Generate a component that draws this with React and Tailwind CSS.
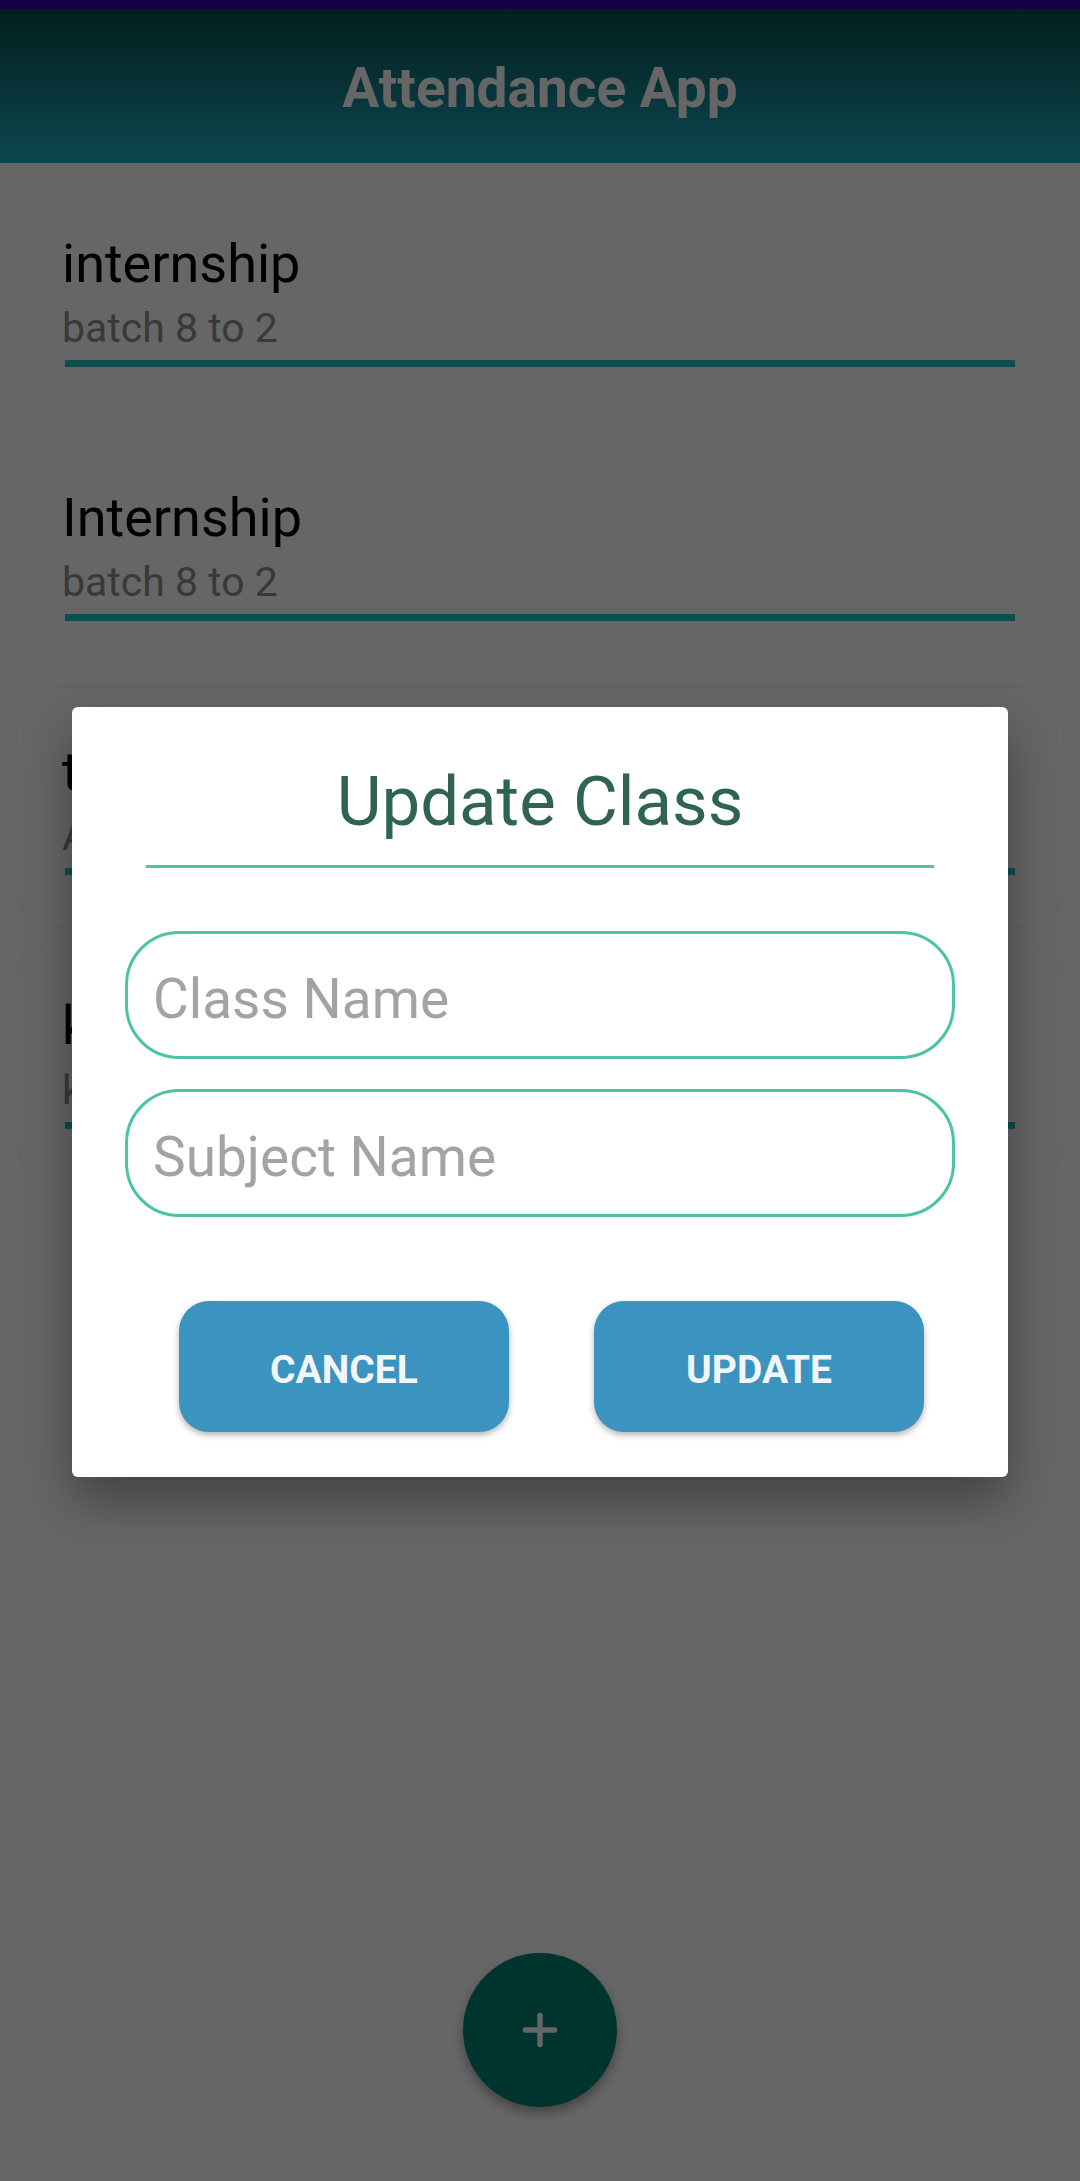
import React from "react";
import { Plus } from "lucide-react";

const classes = [
  { name: "internship", subject: "batch 8 to 2" },
  { name: "Internship", subject: "batch 8 to 2" },
  { name: "test", subject: "Android" },
  { name: "kotlin", subject: "kotlin basics" },
];

const ClassCard = ({ item }) => (
  <div className="h-[238px] rounded-[40px] bg-white shadow-[0_0_5px_rgba(0,0,0,0.07)] px-[45px] pt-[53px]">
    <div className="text-[54px] leading-[62px] text-black">{item.name}</div>
    <div className="text-[41px] leading-[47px] text-[#8f8f8f] mt-[10px]">
      {item.subject}
    </div>
    <div className="h-[7px] mx-[3px] mt-[8px] bg-[#21c4c4]"></div>
  </div>
);

const App = () => {
  return (
    <div
      className="relative w-[1080px] h-[2181px] bg-white overflow-hidden"
      style={{ fontFamily: "Roboto, 'Noto Sans', sans-serif" }}
    >
      <div className="h-[9px] bg-[#3700B3]"></div>
      <div className="h-[154px] bg-gradient-to-b from-[#074f4e] to-[#20b2c8] flex items-center justify-center pt-[5px]">
        <h1 className="text-[55px] font-bold text-white">Attendance App</h1>
      </div>

      <div className="flex flex-col gap-[16px] px-[17px] pt-[17px]">
        {classes.map((c, i) => (
          <ClassCard key={i} item={c} />
        ))}
      </div>

      {/* add button */}
      <button className="absolute left-[463px] top-[1953px] w-[154px] h-[154px] rounded-full bg-[#008577] shadow-[0_6px_12px_rgba(0,0,0,0.35)] flex items-center justify-center">
        <Plus size={50} color="#ffffff" strokeWidth={2.6} />
      </button>

      {/* dim overlay + dialog */}
      <div className="absolute inset-0 bg-black/60 flex justify-center pt-[707px]">
        <div className="w-[936px] h-[770px] bg-white rounded-[6px] shadow-[0_24px_48px_rgba(0,0,0,0.35)] flex flex-col">
          <h2 className="text-center text-[69px] leading-[80px] text-[#2f6352] pt-[55px]">
            Update Class
          </h2>
          <div className="h-[3px] mx-[74px] mt-[23px] bg-[#52bfa7]"></div>

          <div className="flex flex-col gap-[30px] mx-[53px] mt-[63px]">
            <input
              className="h-[128px] rounded-[54px] border-[3px] border-[#4cc3a6] pl-[25px] pt-[8px] text-[55px] outline-none placeholder:text-[#a3a3a3]"
              placeholder="Class Name"
            />
            <input
              className="h-[128px] rounded-[54px] border-[3px] border-[#4cc3a6] pl-[25px] pt-[8px] text-[55px] outline-none placeholder:text-[#a3a3a3]"
              placeholder="Subject Name"
            />
          </div>

          <div className="flex gap-[85px] pl-[107px] mt-[84px]">
            <button className="w-[330px] h-[131px] rounded-[30px] bg-[#3b93bf] text-[#f2f6fa] text-[39px] font-bold pt-[8px] shadow-[0_3px_6px_rgba(0,0,0,0.3)]">
              CANCEL
            </button>
            <button className="w-[330px] h-[131px] rounded-[30px] bg-[#3b93bf] text-[#f2f6fa] text-[39px] font-bold pt-[8px] shadow-[0_3px_6px_rgba(0,0,0,0.3)]">
              UPDATE
            </button>
          </div>
        </div>
      </div>
    </div>
  );
};

export default App;
